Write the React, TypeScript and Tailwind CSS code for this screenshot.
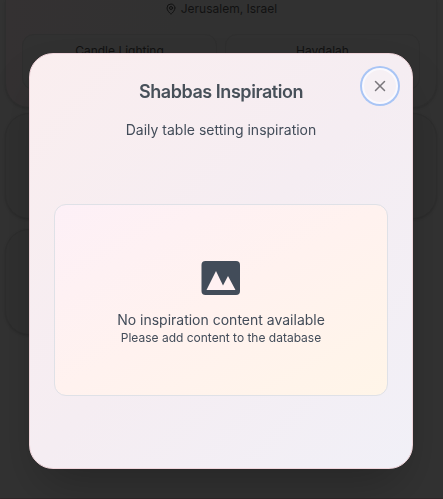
import { MapPin, X } from "lucide-react";

function TimeCard({ label }: { label: string }) {
  return (
    <div className="h-14 flex-1 rounded-xl border border-[#2e2e2e] bg-[#313131] pt-2 text-center text-xs leading-4">
      {label}
    </div>
  );
}

function PictureIcon() {
  return (
    <svg width="40" height="34" viewBox="0 0 40 34" aria-hidden="true">
      <rect x="0.5" width="38.5" height="34" rx="4" fill="#424c59" />
      <path d="M5.5 29 15 10 22 24.5 27 15 34.5 29Z" fill="#fff1f2" />
    </svg>
  );
}

function Backdrop() {
  return (
    <main className="flex min-h-screen flex-col border-b border-[#2f2729] bg-[#323232] pl-[5px] pr-[6px] text-[#111111]">
      <section className="h-[108px] rounded-b-3xl border border-t-0 border-[#2e2e2e] bg-linear-to-r from-[#343132] to-[#313131] to-40% px-4 shadow-sm">
        <p className="flex items-center justify-center gap-1 text-xs leading-[18px]">
          <MapPin size={12} />
          Jerusalem, Israel
        </p>
        <div className="mt-4 flex gap-2">
          <TimeCard label="Candle Lighting" />
          <TimeCard label="Havdalah" />
        </div>
      </section>
      <section className="mt-[5px] h-[106px] rounded-3xl border border-[#2d2d2d] bg-[#303030] shadow-sm" />
      <div className="mt-[10px] flex gap-2">
        <section className="h-[106px] flex-1 rounded-3xl border border-[#2d2d2d] bg-[#303030] shadow-sm" />
        <div className="flex-1" />
      </div>
    </main>
  );
}

export default function App() {
  return (
    <div className="relative font-['Inter',sans-serif]">
      <Backdrop />
      <div className="fixed inset-0 flex items-center pl-[29px] pr-[30px] pt-[23px]">
        <div
          role="dialog"
          aria-labelledby="dialog-title"
          className="relative mx-auto flex min-h-[416px] w-full max-w-md flex-col rounded-3xl border border-[#efd4da] bg-linear-to-br from-[#faeeef] via-[#f5edf2] to-[#f1f0f7] px-6 pb-6 pt-6 text-center text-[#424c59] shadow-2xl"
        >
          <h2 id="dialog-title" className="text-lg font-semibold leading-7 tracking-tight text-[#475059]">
            Shabbas Inspiration
          </h2>
          <p className="mt-[14px] text-sm leading-5">Daily table setting inspiration</p>
          <div className="flex flex-1 flex-col pt-16">
            <div className="flex h-48 flex-col items-center justify-center rounded-xl border border-[#dfe1e7] bg-linear-to-br from-[#fdf0f7] via-[#fff2ef] to-[#fff5e8] pt-[7px]">
              <PictureIcon />
              <p className="mt-[15px] text-sm leading-5">No inspiration content available</p>
              <p className="text-xs leading-4">Please add content to the database</p>
            </div>
          </div>
          <button
            type="button"
            aria-label="Close"
            className="absolute right-[14px] top-[14px] flex size-9 items-center justify-center rounded-full border-2 border-[#fbf9fd] bg-[#f6f0f4] text-[#7a777c] ring-2 ring-[#a9c5f5]"
          >
            <X size={18} strokeWidth={2} className="shrink-0" />
          </button>
        </div>
      </div>
    </div>
  );
}
